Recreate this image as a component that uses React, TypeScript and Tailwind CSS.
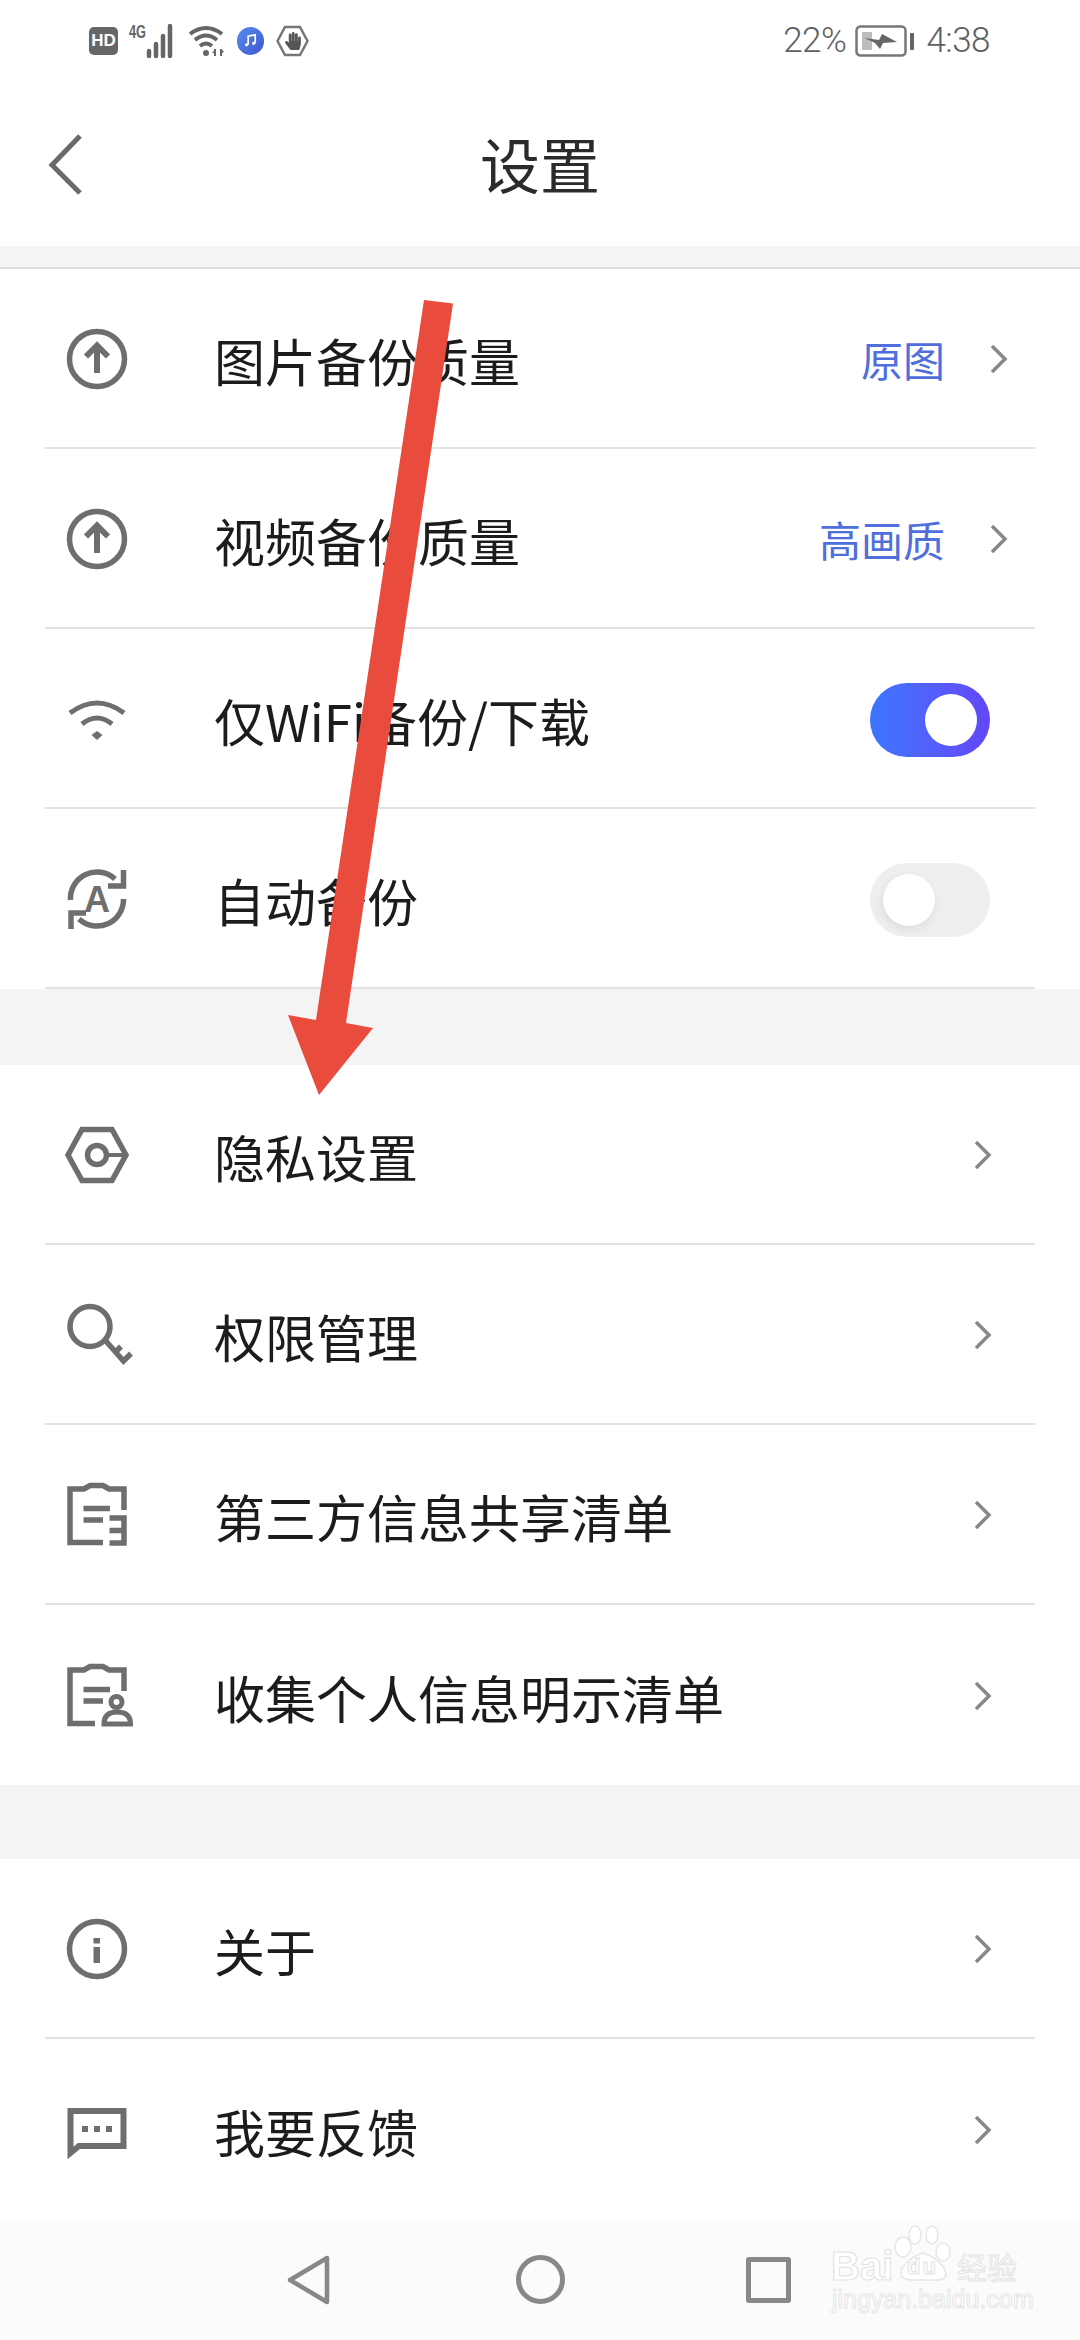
import type { ReactNode } from 'react'
import { FaHandPaper } from 'react-icons/fa'

const cjk = "font-['Noto_Sans_CJK_SC','Noto_Sans',sans-serif]"

function Icon({ children }: { children: ReactNode }) {
  return (
    <svg
      viewBox="0 0 64 64"
      className="w-[64px] h-[64px] shrink-0 overflow-visible"
      fill="none"
      stroke="#6e6e6e"
      strokeWidth={5.5}
    >
      {children}
    </svg>
  )
}

const UploadIcon = () => (
  <Icon>
    <circle cx="32" cy="32" r="27.5" />
    <path d="M32 46V19M21 29.5 32 18.5 43 29.5" strokeWidth={6} />
  </Icon>
)

const WifiIcon = () => (
  <Icon>
    <path d="M5 26Q32 6 59 26M17 37Q32 25 47 37" strokeWidth={5} />
    <path d="M26.500 48 32 44l5.500 4L32 53Z" fill="#6e6e6e" stroke="none" />
  </Icon>
)

const AutoIcon = () => (
  <Icon>
    <path d="M5.500 33A26.500 26.500 0 0 1 50 12" />
    <path d="M58.500 3V19H43" />
    <path d="M58.500 32A26.500 26.500 0 0 1 14 52" />
    <path d="M6 62V46H21" />
    <text x="32" y="45" textAnchor="middle" fontSize="36" fontWeight="700" fontFamily="'Liberation Sans',sans-serif" fill="#6e6e6e" stroke="none">
      A
    </text>
  </Icon>
)

const PrivacyIcon = () => (
  <Icon>
    <path d="M3 32 17 6.500H47L61 32 47 57.500H17Z" />
    <circle cx="32" cy="32" r="9.500" />
    <path d="M42 32H60" strokeWidth={4} />
  </Icon>
)

const KeyIcon = () => (
  <Icon>
    <circle cx="25" cy="23.500" r="20" />
    <path d="M40 37 58.500 58 66 50.500M50 49.500 56 43.500" />
  </Icon>
)

const ClipboardList = () => (
  <Icon>
    <path d="M59 27V6H44L38 2.500H25L19 6H5V59.500H38" />
    <path d="M18.500 25.500H45M18.500 37H38M44.500 35H59V60H44.500M44.500 47.500H59" />
  </Icon>
)

const ClipboardUser = () => (
  <Icon>
    <path d="M59 27V6H44L38 2.500H25L19 6H5V59.500H30" />
    <path d="M18.500 25.500H45M18.500 37H38" />
    <circle cx="51.500" cy="38" r="5.500" strokeWidth={5} />
    <path d="M39 60Q39 48 52 48 65.500 48 65.500 60Z" strokeWidth={5} />
  </Icon>
)

const InfoIcon = () => (
  <Icon>
    <circle cx="32" cy="32" r="27.500" />
    <path d="M28.500 21H35V26.500H28.500ZM28.500 30H35V46H28.500Z" fill="#6e6e6e" stroke="none" />
  </Icon>
)

const FeedbackIcon = () => (
  <Icon>
    <path d="M5.500 13H58.500V48H14L5.500 55Z" strokeWidth={6} />
    <path d="M17 28H23V34H17ZM29 28H35V34H29ZM41 28H47V34H41Z" fill="#6e6e6e" stroke="none" />
  </Icon>
)

function Chevron({ className }: { className: string }) {
  return (
    <svg viewBox="0 0 20 30" className={`w-[20px] h-[30px] shrink-0 ${className}`} fill="none" stroke="#888888" strokeWidth={3.5}>
      <path d="M3 2 16 15 3 28" />
    </svg>
  )
}

function Toggle({ on }: { on: boolean }) {
  return on ? (
    <div className="w-[120px] h-[74px] rounded-full bg-gradient-to-r from-[#3a76ff] to-[#6246f8] flex items-center justify-end pr-[13px]">
      <div className="w-[52px] h-[52px] rounded-full bg-white" />
    </div>
  ) : (
    <div className="w-[120px] h-[74px] rounded-full bg-[#eeeeee] flex items-center pl-[13px]">
      <div className="w-[52px] h-[52px] rounded-full bg-white shadow-[-1px_3px_8px_rgba(0,0,0,0.08)]" />
    </div>
  )
}

interface RowProps {
  icon: ReactNode
  label: string
  value?: string
  right?: ReactNode
  chevron?: string
  last?: boolean
}

function Row({ icon, label, value, right, chevron, last }: RowProps) {
  return (
    <div className={`mx-[45px] h-[180px] pt-[2px] flex items-center ${last ? '' : 'border-b-2 border-[#e2e2e2]'}`}>
      <div className="ml-[20px] mr-[85px]">{icon}</div>
      <span className={`flex-1 pt-[2px] text-[51px] leading-none text-[#1c1c1c] ${cjk}`}>{label}</span>
      {value && <span className={`text-[42px] leading-none text-[#4f6fdc] mr-[44px] ${cjk}`}>{value}</span>}
      {right}
      {chevron && <Chevron className={chevron} />}
    </div>
  )
}

function StatusBar() {
  return (
    <div className="h-[81px] pl-[89px] pr-[90px] flex items-center justify-between text-[#5f5f5f] font-['Roboto',sans-serif]">
      <div className="flex items-center">
        <div className="w-[29px] h-[28px] rounded-[5px] bg-[#666666] text-white text-[17px] font-bold leading-none flex items-center justify-center font-['Liberation_Sans',sans-serif]">
          HD
        </div>
        <svg viewBox="0 0 52 32" className="w-[52px] h-[32px] ml-[11px] overflow-visible">
          <text x="0" y="13" fontSize="18" fontWeight="700" fill="#666666" fontFamily="'Liberation Sans',sans-serif" textLength="17" lengthAdjust="spacingAndGlyphs">
            4G
          </text>
          <path d="M20 31V26M27 31V19M34 31V11M41 31V1" stroke="#666666" strokeWidth={4.500} strokeLinecap="round" />
        </svg>
        <svg viewBox="0 0 38 32" className="w-[38px] h-[32px] ml-[7px]" fill="none" stroke="#666666" strokeWidth={4}>
          <path d="M2 9Q18-3 34 9M7 15Q18 6 29 15M12 21Q18 16 24 21" />
          <circle cx="18" cy="28" r="3" fill="#666666" stroke="none" />
          <path d="M27 31V24M33 31V24" strokeWidth={2} />
          <path d="M24 28l3-3.500L27 28ZM33 24v5l3-2.500Z" fill="#666666" stroke="none" />
        </svg>
        <div className="w-[27px] h-[28px] ml-[11px] rounded-full bg-gradient-to-br from-[#5a8cf0] to-[#3f55d0] flex items-center justify-center">
          <svg viewBox="0 0 16 16" className="w-[15px] h-[15px]" fill="none" stroke="white" strokeWidth={1.800}>
            <path d="M5.500 12.500V3.500L13 2V11" />
            <circle cx="3.800" cy="12.500" r="1.700" fill="white" stroke="none" />
            <circle cx="11.300" cy="11" r="1.700" fill="white" stroke="none" />
          </svg>
        </div>
        <div className="relative w-[33px] h-[32px] ml-[12px] flex items-center justify-center">
          <svg viewBox="0 0 33 32" className="absolute inset-0 w-full h-full" fill="none" stroke="#777777" strokeWidth={2.500}>
            <path d="M1.500 16 9 2H24L31.500 16 24 30H9Z" />
          </svg>
          <FaHandPaper className="relative w-[16px] h-[18px] text-[#555555]" />
        </div>
      </div>
      <div className="flex items-center text-[35px] font-light leading-none tracking-[-0.5px]">
        <span>22%</span>
        <svg viewBox="0 0 60 32" className="w-[60px] h-[32px] ml-[9px]" fill="none">
          <rect x="1.500" y="1.500" width="49" height="29" rx="4" stroke="#777777" strokeWidth={2.500} />
          <rect x="7" y="7" width="10" height="18" fill="#bdbdbd" />
          <path d="M10 13 24 15 27 9 42 17 28 18 25 24 20 18Z" fill="#666666" />
          <rect x="55" y="8" width="4" height="17" rx="1" fill="#666666" />
        </svg>
        <span className="ml-[11px]">4:38</span>
      </div>
    </div>
  )
}

function NavBar() {
  return (
    <div className="h-[121px] bg-[#fbfbfb] flex items-center justify-center">
      <div className="w-[228px] flex justify-center">
        <svg viewBox="0 0 44 50" className="w-[44px] h-[50px] mr-[6px]" fill="none" stroke="#888888" strokeWidth={4.500} strokeLinejoin="round">
          <path d="M40 3V47L3 25Z" />
        </svg>
      </div>
      <div className="w-[228px] flex justify-center">
        <div className="w-[49px] h-[49px] rounded-full border-[5px] border-[#888888]" />
      </div>
      <div className="w-[228px] flex justify-center">
        <div className="w-[45px] h-[46px] rounded-[3px] border-[5px] border-[#888888]" />
      </div>
    </div>
  )
}

export default function App() {
  return (
    <div className="relative w-[1080px] h-[2340px] overflow-hidden bg-white">
      <StatusBar />
      <div className="relative h-[165px] flex items-center justify-center">
        <svg viewBox="0 0 36 62" className="absolute left-[47px] top-1/2 -translate-y-1/2 w-[36px] h-[62px]" fill="none" stroke="#6a6a6a" strokeWidth={5}>
          <path d="M33 3 5 32 33 60" />
        </svg>
        <span className={`text-[60px] leading-none text-[#2b2b2b] pb-[2px] ${cjk}`}>设置</span>
      </div>
      <div className="h-[23px] bg-[#f4f4f4] border-b-2 border-[#dedede]" />

      <Row icon={<UploadIcon />} label="图片备份质量" value="原图" chevron="mr-[26px]" />
      <Row icon={<UploadIcon />} label="视频备份质量" value="高画质" chevron="mr-[26px]" />
      <Row icon={<WifiIcon />} label="仅WiFi备份/下载" right={<div className="mr-[45px] mt-[2px]"><Toggle on /></div>} />
      <Row icon={<AutoIcon />} label="自动备份" right={<div className="mr-[45px] mt-[2px]"><Toggle on={false} /></div>} />

      <div className="h-[76px] bg-[#f4f4f4]" />

      <Row icon={<PrivacyIcon />} label="隐私设置" chevron="mr-[42px]" />
      <Row icon={<KeyIcon />} label="权限管理" chevron="mr-[42px]" />
      <Row icon={<ClipboardList />} label="第三方信息共享清单" chevron="mr-[42px]" />
      <Row icon={<ClipboardUser />} label="收集个人信息明示清单" chevron="mr-[42px]" last />

      <div className="h-[74px] bg-[#f4f4f4]" />

      <Row icon={<InfoIcon />} label="关于" chevron="mr-[42px]" />
      <Row icon={<FeedbackIcon />} label="我要反馈" chevron="mr-[42px]" last />

      <NavBar />

      {/* red annotation arrow over the list */}
      <svg viewBox="0 0 1080 2340" className="absolute inset-0 w-[1080px] h-[2340px] pointer-events-none">
        <path d="M424 300 453 303.500 346 1023 373 1028 319 1095 288 1015 316 1020Z" fill="#e94b3c" />
      </svg>

      {/* watermark in the nav bar corner */}
      <div className="absolute left-[828px] top-[2224px] w-[196px] h-[94px] pointer-events-none">
        <svg viewBox="0 0 196 94" className="absolute inset-0 w-full h-full" fill="white" stroke="#e6e6e6" strokeWidth={1.500}>
          <ellipse cx="75" cy="23" rx="8" ry="10" />
          <ellipse cx="87" cy="11" rx="6" ry="9" />
          <ellipse cx="104" cy="11" rx="6" ry="9" />
          <ellipse cx="115" cy="28" rx="7" ry="9" />
          <path d="M95 29Q108 33 116 44 122 56 108 56H84Q70 56 74 44 82 33 95 29Z" />
        </svg>
        <span className="absolute left-[3px] top-[22px] text-[40px] leading-none font-bold text-white [-webkit-text-stroke:1px_#e2e2e2] font-['Liberation_Sans',sans-serif]">
          Bai
        </span>
        <span className="absolute left-[79px] top-[32px] text-[22px] leading-none font-bold tracking-[2px] text-white [-webkit-text-stroke:1px_#e2e2e2] font-['Liberation_Sans',sans-serif]">
          du
        </span>
        <span className={`absolute left-[129px] top-[27px] text-[30px] leading-none text-white [-webkit-text-stroke:1px_#e2e2e2] ${cjk}`}>
          经验
        </span>
        <span className="absolute left-[4px] top-[63px] text-[25px] leading-none text-white [-webkit-text-stroke:1px_#e6e6e6] font-['Liberation_Sans',sans-serif]">
          jingyan.baidu.com
        </span>
      </div>
    </div>
  )
}
